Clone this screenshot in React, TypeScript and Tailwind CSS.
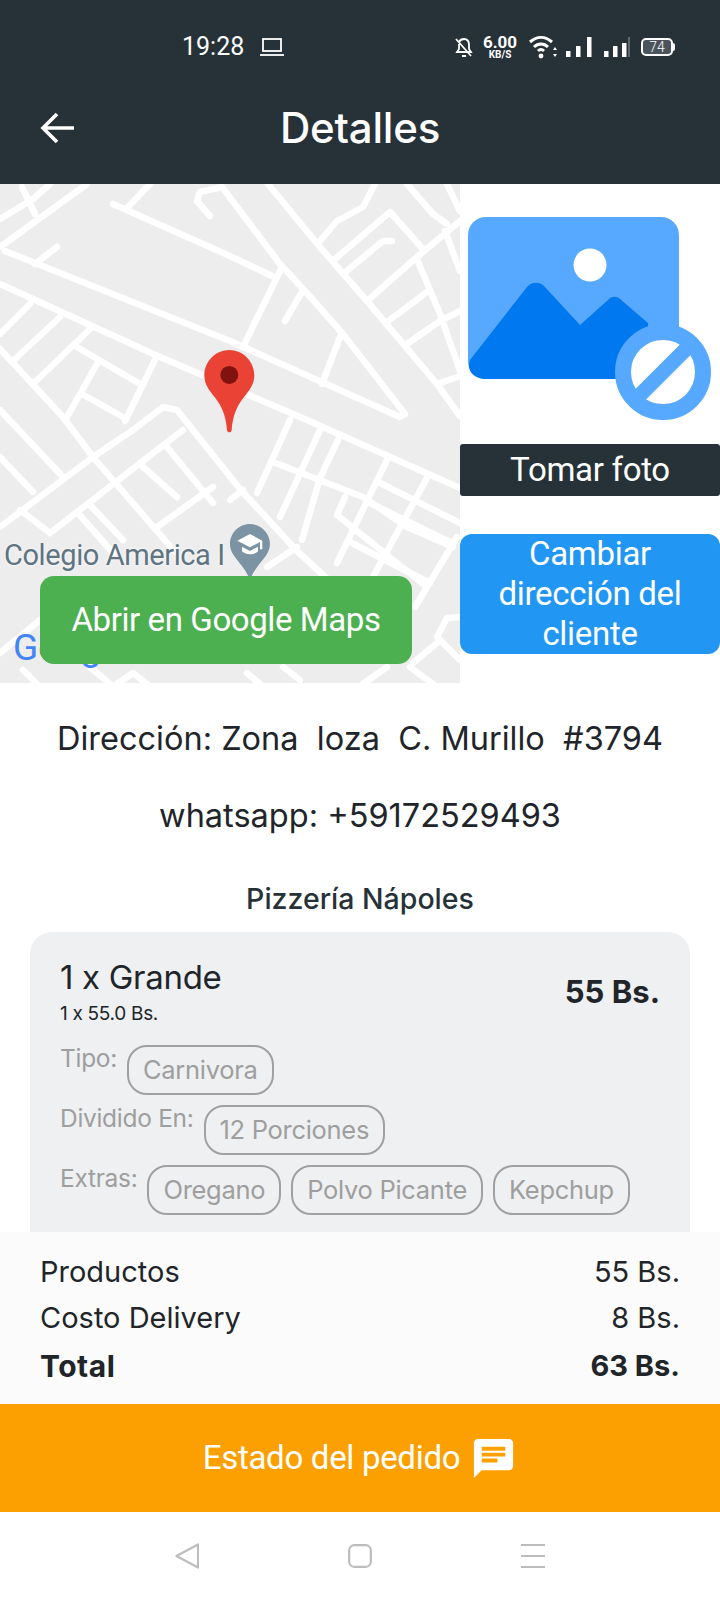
const mapRoads = [
  "5,67 230,157 400,233 405,230 343,150 305,107 280,80 222,3 200,8 197,17 210,32",
  "0,100 33,115 160,173 307,236 460,304",
  "113,20 230,72 272,92",
  "280,87 243,163",
  "128,23 150,0",
  "0,63 87,0",
  "0,35 33,15 50,0",
  "22,3 35,30",
  "35,80 57,63",
  "0,150 30,120",
  "13,177 60,133",
  "35,198 90,145",
  "0,165 63,233 93,273 175,368",
  "77,163 140,200",
  "157,172 125,237",
  "97,180 67,233",
  "82,210 123,233",
  "268,0 320,63 367,117 437,200 460,232",
  "320,57 337,37 363,23 375,0",
  "335,75 390,28 423,65",
  "343,90 383,57 392,57",
  "367,117 417,73 460,37",
  "387,138 427,108",
  "407,160 440,137 460,127",
  "417,75 440,130 460,187",
  "445,47 460,87",
  "407,0 433,30 447,40",
  "447,0 460,27",
  "437,200 460,192",
  "285,137 302,108",
  "322,200 340,153",
  "0,226 63,293",
  "0,273 33,308",
  "0,343 93,273 133,246 163,223 177,226 240,305 297,367 333,400",
  "20,326 50,349",
  "50,349 183,246",
  "167,263 213,319",
  "143,283 177,313",
  "90,321 123,356",
  "78,329 113,369",
  "157,343 213,303",
  "230,316 243,306",
  "267,383 297,363",
  "290,236 257,309",
  "320,246 280,333",
  "338,256 320,294 302,356",
  "273,278 363,313 407,343 453,363",
  "387,276 337,379",
  "427,294 373,393",
  "345,313 337,331 427,403",
  "380,299 460,339",
  "370,319 452,359",
  "352,359 430,399",
  "457,353 415,423",
  "460,433 447,434 437,453 460,476",
  "413,479 437,459",
  "0,469 40,436",
  "23,486 37,500",
  "90,483 110,500",
  "117,500 133,489 147,500",
  "283,483 300,496",
  "247,489 260,500",
  "363,500 387,483",
  "410,483 433,500",
];

const MapView = () => (
  <div className="relative h-full w-[460px] overflow-hidden bg-[#ededed]">
    <svg viewBox="0 0 460 499" className="absolute inset-0 h-full w-full">
      <g fill="none" stroke="#ffffff" strokeWidth="6.5" strokeLinejoin="round" strokeLinecap="round">
        {mapRoads.map((points) => (
          <polyline key={points} points={points} />
        ))}
      </g>
      <g transform="translate(0 -4) scale(0.3333)">
        <path d="M688 510c-41 0-75 34-75 76 0 28 15 46 33 68 20 25 32 55 35 96 1 5 3 7 7 7s6-2 7-7c3-41 15-71 35-96 18-22 33-40 33-68 0-42-34-76-75-76z" fill="#ea4335" />
        <circle cx="688" cy="585" r="27" fill="#80130f" />
        <path d="M750 1032c-33 0-60 27-60 60 0 40 45 60 60 110 15-50 60-70 60-110 0-33-27-60-60-60z" fill="#7b93a3" />
        <path d="M750 1062l-38 20 38 20 30-16v22h7v-26zM726 1100v14c12 12 36 12 48 0v-14l-24 13z" fill="#ffffff" />
      </g>
    </svg>
    <span className="absolute left-[4px] top-[351px] font-['Roboto'] text-[29px] leading-[40px] tracking-[-0.4px] text-[#5f7482] [text-shadow:0_0_3px_#ffffff]">
      Colegio America I
    </span>
    <span className="absolute left-[13px] top-[440px] font-['Roboto'] text-[37px] leading-[48px]">
      <span className="text-[#4285f4]">G</span>
      <span className="text-[#ea4335]">o</span>
      <span className="text-[#fbbc05]">o</span>
      <span className="text-[#4285f4]">g</span>
    </span>
    <button className="absolute left-[40px] top-[392px] flex h-[88px] w-[372px] items-center justify-center rounded-[14px] bg-[#4caf50] font-['Roboto'] text-[33px] tracking-[-0.4px] text-white">
      Abrir en Google Maps
    </button>
  </div>
);

const NoImage = () => (
  <svg viewBox="0 0 260 240" className="h-[240px] w-[260px]">
    <rect x="8" y="33" width="211" height="162" rx="18" fill="#57a9ff" />
    <path d="M10 176L67 103c4-5 12-6 17-1l36 39 28-25c4-4 8-4 12-1l28 24v56H26c-12 0-20-8-16-19z" fill="#0078f0" />
    <circle cx="130" cy="81" r="16.5" fill="#ffffff" />
    <circle cx="203" cy="188" r="40" fill="#ffffff" stroke="#57a9ff" strokeWidth="16" />
    <line x1="231" y1="160" x2="175" y2="216" stroke="#57a9ff" strokeWidth="15" />
  </svg>
);

const Chip = ({ text }: { text: string }) => (
  <span className="flex h-[50px] items-center rounded-[20px] border-2 border-[#a0a0a0] px-[14px] text-[25.5px] tracking-[-0.3px] text-[#9e9e9e]">
    {text}
  </span>
);

const OptionRow = ({ label, chips }: { label: string; chips: string[] }) => (
  <div className="flex items-start gap-[10px]">
    <span className="text-[24.5px] leading-[26px] tracking-[-0.3px] text-[#9e9e9e]">{label}</span>
    {chips.map((chip) => (
      <Chip key={chip} text={chip} />
    ))}
  </div>
);

const StatusBar = () => (
  <div className="flex h-[94px] items-center pl-[182px] pr-[45px] text-white">
    <span className="w-[62px] font-['Roboto'] text-[25px]">19:28</span>
    <svg viewBox="0 0 24 20" className="ml-[16px] h-[20px] w-[24px]" fill="none" stroke="#ffffff" strokeWidth="1.8">
      <rect x="3" y="2" width="18" height="12" />
      <line x1="0" y1="18" x2="24" y2="18" />
    </svg>
    <div className="ml-auto flex items-center">
      <svg viewBox="0 0 18 24" className="h-[24px] w-[18px]" fill="none" stroke="#ffffff" strokeWidth="1.8">
        <path d="M4 7c1-2 3-3 5-3 4 0 5 3 5 6v4l2 3H2l2-3V9M1 4l15 17M7 21h4" />
      </svg>
      <div className="ml-[10px] flex w-[34px] flex-col items-center font-['Roboto'] font-bold">
        <span className="text-[17px] leading-[16px]">6.00</span>
        <span className="text-[10px] leading-[10px]">KB/S</span>
      </div>
      <svg viewBox="0 0 28 24" className="ml-[12px] h-[24px] w-[28px]" fill="none" stroke="#ffffff" strokeWidth="3">
        <path d="M1 7c7-6 15-6 22 0M5 12c4-4 10-4 14 0M9 16c2-2 4-2 6 0" />
        <circle cx="12" cy="21" r="2.4" fill="#ffffff" stroke="none" />
        <path d="M26 12l-2 3h4zM26 22l-2-3h4z" fill="#ffffff" stroke="none" />
      </svg>
      <svg viewBox="0 0 64 24" className="ml-[9px] h-[24px] w-[64px]" fill="#ffffff">
        <rect x="0" y="16" width="4.5" height="6" />
        <rect x="10" y="11" width="4.5" height="11" />
        <rect x="21" y="2" width="4.5" height="20" />
        <rect x="38" y="16" width="4.5" height="6" />
        <rect x="47" y="11" width="4.5" height="11" />
        <rect x="56" y="8" width="4.5" height="14" />
        <rect x="62" y="2" width="2" height="20" fill="#5d676d" />
      </svg>
      <div className="ml-[11px] flex items-center">
        <div className="flex h-[18px] w-[32px] items-center justify-center rounded-[5px] border-2 border-white bg-[#4a545a] font-['Roboto'] text-[14px] font-light">
          74
        </div>
        <div className="h-[8px] w-[2px] rounded-r-sm bg-white" />
      </div>
    </div>
  </div>
);

export default function App() {
  return (
    <div className="flex h-[1600px] w-[720px] flex-col overflow-hidden bg-white font-['Inter',sans-serif]">
      <header className="h-[184px] shrink-0 bg-[#263238]">
        <StatusBar />
        <div className="grid h-[68px] grid-cols-[1fr_auto_1fr] items-center">
          <svg viewBox="0 0 34 32" className="ml-[40px] h-[32px] w-[34px]" fill="none" stroke="#ffffff" strokeWidth="3.6">
            <path d="M17 2L3 16l14 14M3 16h31" />
          </svg>
          <h1 className="text-[42px] font-medium leading-[48px] tracking-[-0.2px] text-white">Detalles</h1>
        </div>
      </header>

      <section className="flex h-[499px] shrink-0">
        <MapView />
        <div className="flex w-[260px] flex-col">
          <NoImage />
          <button className="mt-[20px] flex h-[52px] items-center justify-center rounded-[3px] bg-[#263238] font-['Roboto'] text-[33px] tracking-[-0.3px] text-white">
            Tomar foto
          </button>
          <button className="mt-[38px] flex h-[120px] items-center justify-center rounded-[12px] bg-[#2196f3] px-[30px] text-center font-['Roboto'] text-[33px] leading-[40px] tracking-[-0.3px] text-white">
            Cambiar dirección del cliente
          </button>
        </div>
      </section>

      <div className="mt-[32px] flex flex-col items-center text-[#212529]">
        <p className="whitespace-pre text-[32.5px] leading-[48px]">Dirección: Zona  loza  C. Murillo  #3794</p>
        <p className="mt-[29px] text-[32.5px] leading-[48px]">whatsapp: +59172529493</p>
        <h2 className="mt-[39px] text-[28.5px] font-medium leading-[40px] text-[#263238]">Pizzería Nápoles</h2>
      </div>

      <div className="mx-[30px] mt-[13px] h-[300px] shrink-0 rounded-t-[22px] bg-[#eef0f2] px-[30px] pt-[27px]">
        <div className="flex items-start justify-between">
          <div>
            <p className="text-[33px] leading-[36px] tracking-[-0.3px] text-[#212529]">1 x Grande</p>
            <p className="mt-[6px] text-[19px] leading-[26px] tracking-[-0.3px] text-[#212529]">1 x 55.0 Bs.</p>
          </div>
          <span className="mt-[15px] text-[31px] font-bold leading-[36px] text-[#212529]">55 Bs.</span>
        </div>
        <div className="mt-[18px] flex flex-col gap-[10px]">
          <OptionRow label="Tipo:" chips={["Carnivora"]} />
          <OptionRow label="Dividido En:" chips={["12 Porciones"]} />
          <OptionRow label="Extras:" chips={["Oregano", "Polvo Picante", "Kepchup"]} />
        </div>
      </div>

      <div className="flex h-[172px] shrink-0 flex-col bg-[#fbfbfb] px-[40px] pt-[17px] text-[29px] text-[#212529]">
        <div className="flex h-[46px] items-center justify-between">
          <span>Productos</span>
          <span>55 Bs.</span>
        </div>
        <div className="flex h-[46px] items-center justify-between">
          <span>Costo Delivery</span>
          <span>8 Bs.</span>
        </div>
        <div className="flex h-[50px] items-center justify-between font-bold">
          <span className="tracking-[0.5px] text-[30px]">Total</span>
          <span>63 Bs.</span>
        </div>
      </div>

      <button className="flex h-[108px] shrink-0 items-center justify-center gap-[10px] bg-[#fba000] font-['Roboto'] text-[33px] tracking-[-0.3px] text-white">
        Estado del pedido
        <svg viewBox="0 0 24 24" className="h-[47px] w-[47px]" fill="#ffffff">
          <path d="M20 2H4c-1.1 0-2 .9-2 2v18l4-4h14c1.1 0 2-.9 2-2V4c0-1.1-.9-2-2-2zM6 9h12v2H6V9zm8 5H6v-2h8v2zm4-6H6V6h12v2z" />
        </svg>
      </button>

      <nav className="flex h-[88px] shrink-0 items-center justify-center gap-[149px]">
        <svg viewBox="0 0 24 26" className="h-[26px] w-[24px]" fill="none" stroke="#bdbdbd" strokeWidth="2.2" strokeLinejoin="round">
          <path d="M23 1.5v23L1.5 13z" />
        </svg>
        <svg viewBox="0 0 24 24" className="h-[24px] w-[24px]" fill="none" stroke="#bdbdbd" strokeWidth="2.2">
          <rect x="1.2" y="1.2" width="21.6" height="21.6" rx="5" />
        </svg>
        <svg viewBox="0 0 24 24" className="h-[24px] w-[24px]" fill="none" stroke="#bdbdbd" strokeWidth="2.2">
          <path d="M0 1h24M0 12h24M0 23h24" />
        </svg>
      </nav>
    </div>
  );
}
